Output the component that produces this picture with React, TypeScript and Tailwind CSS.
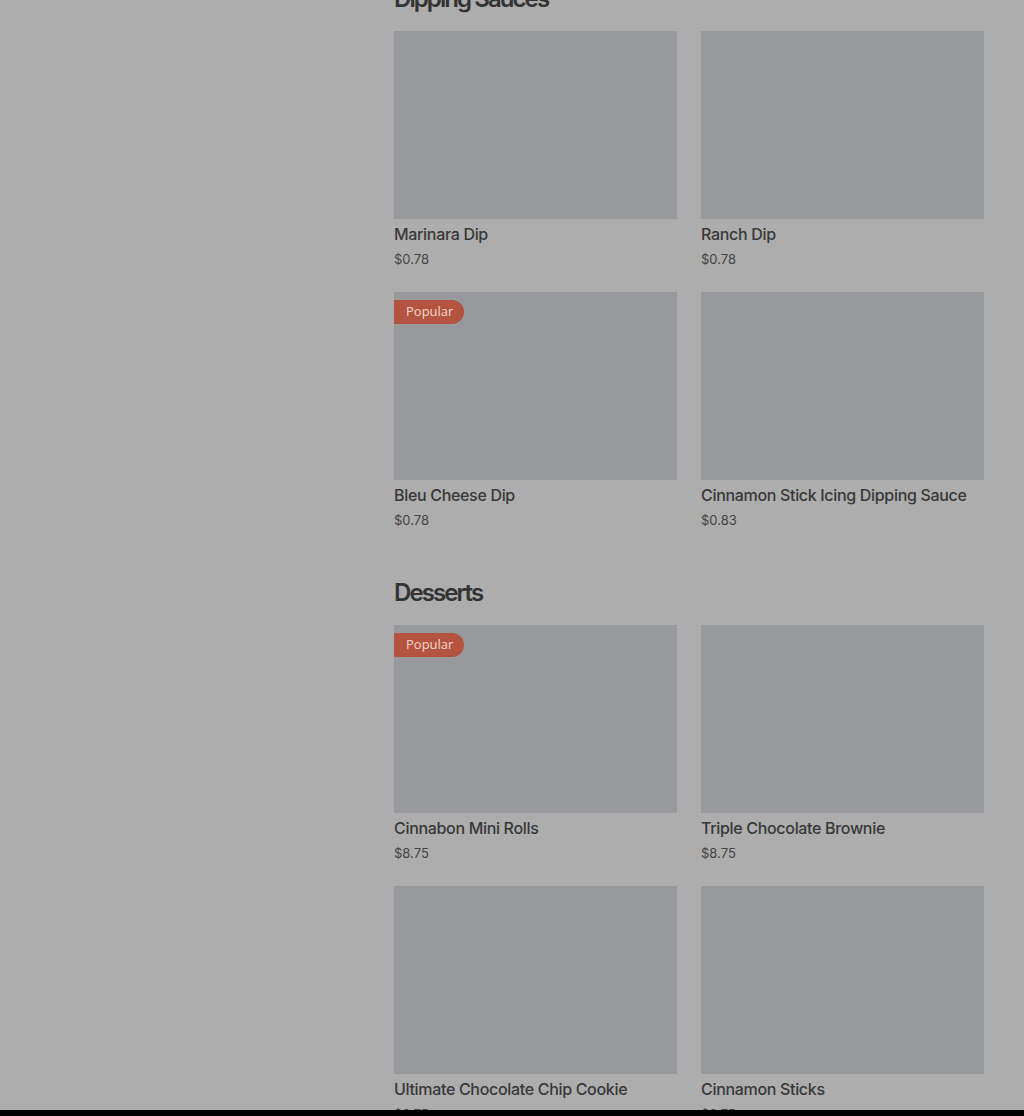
const sections = [
  {
    title: "Dipping Sauces",
    items: [
      { name: "Marinara Dip", price: "$0.78" },
      { name: "Ranch Dip", price: "$0.78" },
      { name: "Bleu Cheese Dip", price: "$0.78", popular: true },
      { name: "Cinnamon Stick Icing Dipping Sauce", price: "$0.83" }
    ]
  },
  {
    title: "Desserts",
    items: [
      { name: "Cinnabon Mini Rolls", price: "$8.75", popular: true },
      { name: "Triple Chocolate Brownie", price: "$8.75" },
      { name: "Ultimate Chocolate Chip Cookie", price: "$3.75" },
      { name: "Cinnamon Sticks", price: "$3.75" }
    ]
  }
]

const ItemCard = ({ item }) => (
  <div className="flex flex-col">
    <div className="relative h-[188px] w-full bg-[#97999c]">
      {item.popular && (
        <span className="absolute left-0 top-2 flex h-6 w-[70px] items-center rounded-r-full bg-[#b4533f] pl-3 text-[13px] text-[#f3d6cf] font-['Open_Sans',sans-serif]">
          Popular
        </span>
      )}
    </div>
    <p className="mt-[3px] text-[16px] leading-6 font-medium tracking-[-0.02em] text-[#383838]">{item.name}</p>
    <p className="mt-[3px] text-[13px] leading-5 text-[#444]">{item.price}</p>
  </div>
)

const App = () => {
  return (
    <div className="relative h-[1116px] w-full overflow-hidden bg-[#adadad] font-['Inter',sans-serif]">
      <div className="ml-[394px] -mt-[17px] w-[590px]">
        {sections.map((section) => (
          <section key={section.title} className="mb-[47px]">
            <h2 className="mb-4 text-[24px] leading-8 font-semibold tracking-[-0.08em] text-[#333]">
              {section.title}
            </h2>
            <div className="grid grid-cols-2 gap-x-6 gap-y-[23px]">
              {section.items.map((item) => (
                <ItemCard key={item.name} item={item} />
              ))}
            </div>
          </section>
        ))}
      </div>
      <div className="absolute bottom-0 left-0 h-[6px] w-full bg-black" />
    </div>
  )
}

export default App
